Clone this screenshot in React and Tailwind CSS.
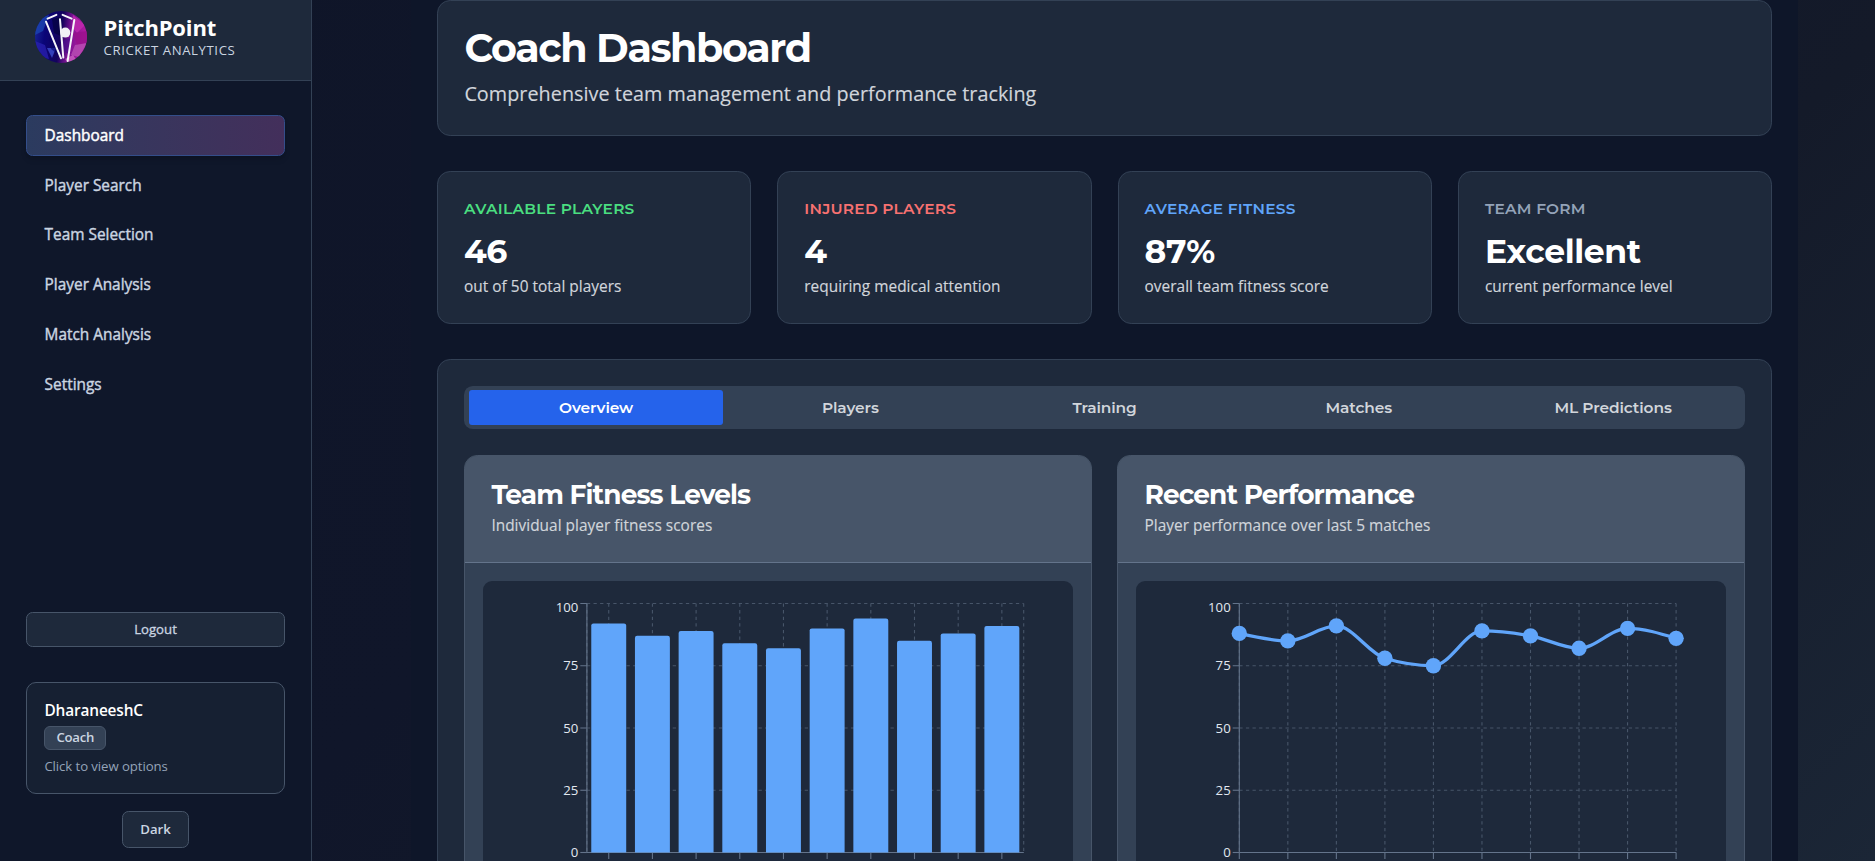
const NAV = ["Dashboard", "Player Search", "Team Selection", "Player Analysis", "Match Analysis", "Settings"];

const STATS = [
  { label: "Available Players", value: "46", note: "out of 50 total players", color: "text-[#4ade80]" },
  { label: "Injured Players", value: "4", note: "requiring medical attention", color: "text-[#f87171]" },
  { label: "Average Fitness", value: "87%", note: "overall team fitness score", color: "text-[#60a5fa]" },
  { label: "Team Form", value: "Excellent", note: "current performance level", color: "text-[#94a3b8]" },
];

const TABS = ["Overview", "Players", "Training", "Matches", "ML Predictions"];

const FITNESS = [92, 87, 89, 84, 82, 90, 94, 85, 88, 91];
const PERFORMANCE = [88, 85, 91, 78, 75, 89, 87, 82, 90, 86];

const PLOT = { width: 436.8, top: 22.5, height: 249 };
const BOTTOM = PLOT.top + PLOT.height;
const yOf = (v) => BOTTOM - (PLOT.height * v) / 100;

/* Monotone cubic interpolation through the given points. */
function monotonePath(pts) {
  const n = pts.length;
  const slope = pts.slice(1).map((p, i) => (p[1] - pts[i][1]) / (p[0] - pts[i][0]));
  const t = pts.map((_, i) => {
    if (i === 0 || i === n - 1) return null;
    const a = slope[i - 1];
    const b = slope[i];
    return (Math.sign(a) + Math.sign(b)) * Math.min(Math.abs(a), Math.abs(b), 0.25 * Math.abs(a + b)) || 0;
  });
  t[0] = (3 * slope[0] - t[1]) / 2;
  t[n - 1] = (3 * slope[n - 2] - t[n - 2]) / 2;
  let d = `M${pts[0][0]},${pts[0][1]}`;
  for (let i = 1; i < n; i++) {
    const [x0, y0] = pts[i - 1];
    const [x1, y1] = pts[i];
    const dx = (x1 - x0) / 3;
    d += `C${x0 + dx},${y0 + dx * t[i - 1]},${x1 - dx},${y1 - dx * t[i]},${x1},${y1}`;
  }
  return d;
}

function Logo() {
  return (
    <svg viewBox="0 0 52 52" className="size-[52px] shrink-0">
      <defs>
        <linearGradient id="ball" x1="0" x2="1" y1="0" y2="0.15">
          <stop offset="0" stopColor="#1a2a9a" />
          <stop offset="0.25" stopColor="#0a0578" />
          <stop offset="0.55" stopColor="#14035c" />
          <stop offset="0.72" stopColor="#7a1393" />
          <stop offset="1" stopColor="#b01aa0" />
        </linearGradient>
        <clipPath id="disc">
          <circle cx="26" cy="26" r="26" />
        </clipPath>
      </defs>
      <g clipPath="url(#disc)">
        <rect width="52" height="52" fill="url(#ball)" />
        <polygon points="0,8 14,4 8,20 0,24" fill="#1c4bb8" opacity=".7" />
        <polygon points="12,37 21,37 17,47" fill="#3d4fd0" opacity=".8" />
        <polygon points="0,30 10,34 14,48 4,46" fill="#2c22b4" opacity=".7" />
        <polygon points="17,8 26,6 28,26 19,22" fill="#03033f" opacity=".7" />
        <polygon points="14,26 22,32 24,44 16,38" fill="#05046a" opacity=".6" />
        <polygon points="38,4 50,14 42,22 37,16" fill="#c22bb0" opacity=".8" />
        <polygon points="38,22 52,20 52,32 42,34" fill="#98108c" opacity=".8" />
        <polygon points="40,34 52,32 44,46 36,44" fill="#b850b4" opacity=".8" />
        <polygon points="28,30 36,26 34,44 29,40" fill="#4a0f8c" opacity=".7" />
        <polygon points="30,48 38,44 42,50 34,52" fill="#e07ad0" opacity=".6" />
        <path
          d="M11 10.7 26 47.3M25 8.3 28.3 46.6M39.3 9 32.6 50M12.6 7.6 21.4 3.8M27.6 3.8 36.6 7.6"
          fill="none"
          stroke="#f5f5fa"
          strokeWidth="2"
          strokeLinecap="round"
        />
        <circle cx="30.3" cy="21.6" r="5" fill="#f1f1f4" />
      </g>
    </svg>
  );
}

function Sidebar() {
  return (
    <aside className="flex h-full w-[312px] shrink-0 flex-col border-r border-[#334155] bg-[#0f172a]">
      <div className="flex h-[81px] shrink-0 items-start gap-[16.6px] border-b border-[#334155] bg-[#1e293b] pt-[11px] pl-[35px]">
        <Logo />
        <div className="pt-[2.8px]">
          <div className="text-[22px] leading-[27.5px] font-bold tracking-[-0.15px] text-white">PitchPoint</div>
          <div className="mt-px text-[13.2px] leading-[17.6px] tracking-[0.58px] text-[#cbd5e1] uppercase">Cricket Analytics</div>
        </div>
      </div>

      <nav className="flex flex-col gap-[8.75px] px-[26px] pt-[34px]">
        {NAV.map((item, i) => (
          <a
            key={item}
            className={
              i === 0
                ? "flex h-[41px] items-center rounded-[6.6px] border border-[#334e8a] bg-linear-to-r from-[#2b3b5f] to-[#432f5b] px-[17.6px] text-[15.4px] font-medium text-white shadow-md shadow-black/15 [-webkit-text-stroke:0.45px]"
                : "flex h-[41px] items-center rounded-[6.6px] border border-transparent px-[17.6px] text-[15.4px] font-medium text-[#cbd5e1] [-webkit-text-stroke:0.4px]"
            }
          >
            {item}
          </a>
        ))}
      </nav>

      <div className="mt-auto flex flex-col items-center px-[26px] pb-[13px]">
        <button className="flex h-[35px] w-full items-center justify-center rounded-[6.6px] border border-[#475569] bg-[#1e293b] pt-px text-[13.2px] font-medium text-[#cbd5e1] [-webkit-text-stroke:0.3px]">
          Logout
        </button>
        <div className="mt-[35px] flex h-[112px] w-full flex-col items-start rounded-[10px] border border-[#475569] bg-[#162032] px-[17.4px] pt-[18px]">
          <div className="text-[15.4px] leading-[20px] font-semibold tracking-[-0.14px] text-white">DharaneeshC</div>
          <span className="mt-[5px] flex h-[24px] items-center rounded-[6px] border border-[#475569] bg-[#334155] px-[11px] text-[13.2px] font-semibold tracking-[-0.25px] text-[#cbd5e1]">
            Coach
          </span>
          <div className="mt-[7px] text-[13.2px] leading-[18px] tracking-[-0.08px] text-[#94a3b8]">Click to view options</div>
        </div>
        <button className="mt-[17.3px] flex h-[37px] w-[67px] items-center justify-center rounded-[6.6px] border border-[#475569] bg-[#1e293b] text-[13.2px] font-semibold text-[#cbd5e1]">
          Dark
        </button>
      </div>
    </aside>
  );
}

function Chart({ data, kind, left }) {
  const right = left + PLOT.width;
  const bars = kind === "bar";
  const step = bars ? PLOT.width / data.length : PLOT.width / (data.length - 1);
  const xs = data.map((_, i) => (bars ? left + step * (i + 0.5) : left + step * i));
  const gridX = bars ? [...xs, left, right] : xs;
  const points = xs.map((x, i) => [x, yOf(data[i])]);
  return (
    <svg width="590" height="330" className="block">
      <g stroke="#475569" strokeWidth="1.1" strokeDasharray="3.3 3.3">
        {[0, 25, 50, 75, 100].map((v) => (
          <line key={v} x1={left} x2={right} y1={yOf(v)} y2={yOf(v)} />
        ))}
        {gridX.map((x) => (
          <line key={x} x1={x} x2={x} y1={PLOT.top} y2={BOTTOM} />
        ))}
      </g>
      <g stroke="#64748b" strokeWidth="1.1">
        <line x1={left} x2={left} y1={PLOT.top} y2={BOTTOM} />
        <line x1={left} x2={right} y1={BOTTOM} y2={BOTTOM} />
        {xs.map((x) => (
          <line key={x} x1={x} x2={x} y1={BOTTOM} y2={BOTTOM + 6.6} />
        ))}
        {[0, 25, 50, 75, 100].map((v) => (
          <line key={v} x1={left - 6.6} x2={left} y1={yOf(v)} y2={yOf(v)} />
        ))}
      </g>
      <g fill="#e2e8f0" fontSize="13.2" textAnchor="end">
        {[0, 25, 50, 75, 100].map((v) => (
          <text key={v} x={left - 8.6} y={v === 100 ? PLOT.top + 8.8 : yOf(v) + 4.7}>
            {v}
          </text>
        ))}
      </g>
      {bars &&
        xs.map((x, i) => {
          const w = step * 0.8;
          const l = x - w / 2;
          const y = yOf(data[i]);
          return (
            <path
              key={x}
              fill="#60a5fa"
              d={`M${l},${BOTTOM}V${y + 2.2}q0,-2.2,2.2,-2.2h${w - 4.4}q2.2,0,2.2,2.2V${BOTTOM}Z`}
            />
          );
        })}
      {!bars && (
        <g>
          <path d={monotonePath(points)} fill="none" stroke="#60a5fa" strokeWidth="3.3" />
          {points.map(([x, y]) => (
            <circle key={x} cx={x} cy={y} r="7.7" fill="#60a5fa" />
          ))}
        </g>
      )}
    </svg>
  );
}

function ChartCard({ title, note, children }) {
  return (
    <section className="min-w-0 flex-1 overflow-hidden rounded-[13.2px] border border-[#475569] bg-[#334155]">
      <div className="h-[107px] border-b border-[#64748b] bg-[#475569] px-[26px] pt-[27px]">
        <h3 className="font-['Montserrat','Inter',sans-serif] text-[26.4px] leading-[24px] font-bold tracking-[-0.88px] text-white">{title}</h3>
        <p className="mt-[8px] text-[15.4px] leading-[22px] tracking-[0.03px] text-[#d1d5db] [-webkit-text-stroke:0.15px]">{note}</p>
      </div>
      <div className="px-[17.4px] pt-[18px]">
        <div className="h-[400px] overflow-hidden rounded-[9px] bg-[#1e293b]">{children}</div>
      </div>
    </section>
  );
}

export default function App() {
  return (
    <div className="flex h-[861px] w-full overflow-hidden bg-[linear-gradient(135deg,#0f1528_0%,#10162a_40%,#141a29_70%,#1b2636_100%)] font-['Open_Sans','Noto_Sans',sans-serif]">
      <Sidebar />
      <main className="ml-[98.6px] h-full w-[1387.4px] shrink-0 overflow-hidden bg-[#0e1629] pr-[25.8px] pl-[26.4px]">
        <header className="h-[136px] rounded-[13.2px] border border-[#334155] bg-[#1e293b] px-[26.4px] pt-[27px]">
          <h1 className="font-['Montserrat','Inter',sans-serif] text-[39.6px] leading-[40px] font-bold tracking-[-1.36px] text-white">
            Coach Dashboard
          </h1>
          <p className="mt-[10.6px] text-[19.8px] leading-[30.8px] tracking-[0.04px] text-[#d1d5db] [-webkit-text-stroke:0.15px]">
            Comprehensive team management and performance tracking
          </p>
        </header>

        <div className="mt-[35px] grid grid-cols-4 gap-[26px]">
          {STATS.map((s) => (
            <div key={s.label} className="h-[153px] rounded-[13.2px] border border-[#334155] bg-[#1e293b] px-[26px] pt-[27.2px]">
              <div className={`font-['Montserrat','Inter',sans-serif] text-[15.4px] leading-[20px] font-semibold tracking-[0.24px] uppercase ${s.color}`}>
                {s.label}
              </div>
              <div className="mt-[13.8px] font-['Montserrat','Inter',sans-serif] text-[33px] leading-[36px] font-bold tracking-[-0.35px] text-white">
                {s.value}
              </div>
              <div className="mt-[8px] text-[15.4px] leading-[20px] tracking-[0.03px] text-[#d1d5db] [-webkit-text-stroke:0.15px]">{s.note}</div>
            </div>
          ))}
        </div>

        <div className="mt-[35px] rounded-[13.2px] border border-[#334155] bg-[#1e293b] px-[26.4px] pt-[26px]">
          <div className="grid h-[43px] grid-cols-5 rounded-[8.8px] bg-[#334155] px-[4.6px] py-[4px]">
            {TABS.map((t, i) => (
              <button
                key={t}
                className={
                  i === 0
                    ? "rounded-[3px] bg-[#2563eb] font-['Montserrat','Inter',sans-serif] text-[15.4px] font-semibold tracking-[-0.08px] text-white"
                    : "rounded-[3px] font-['Montserrat','Inter',sans-serif] text-[15.4px] font-semibold tracking-[-0.08px] text-[#d1d5db]"
                }
              >
                {t}
              </button>
            ))}
          </div>
          <div className="mt-[26px] flex gap-[25.8px]">
            <ChartCard title="Team Fitness Levels" note="Individual player fitness scores">
              <Chart data={FITNESS} kind="bar" left={103.9} />
            </ChartCard>
            <ChartCard title="Recent Performance" note="Player performance over last 5 matches">
              <Chart data={PERFORMANCE} kind="line" left={103.3} />
            </ChartCard>
          </div>
        </div>
      </main>
    </div>
  );
}
